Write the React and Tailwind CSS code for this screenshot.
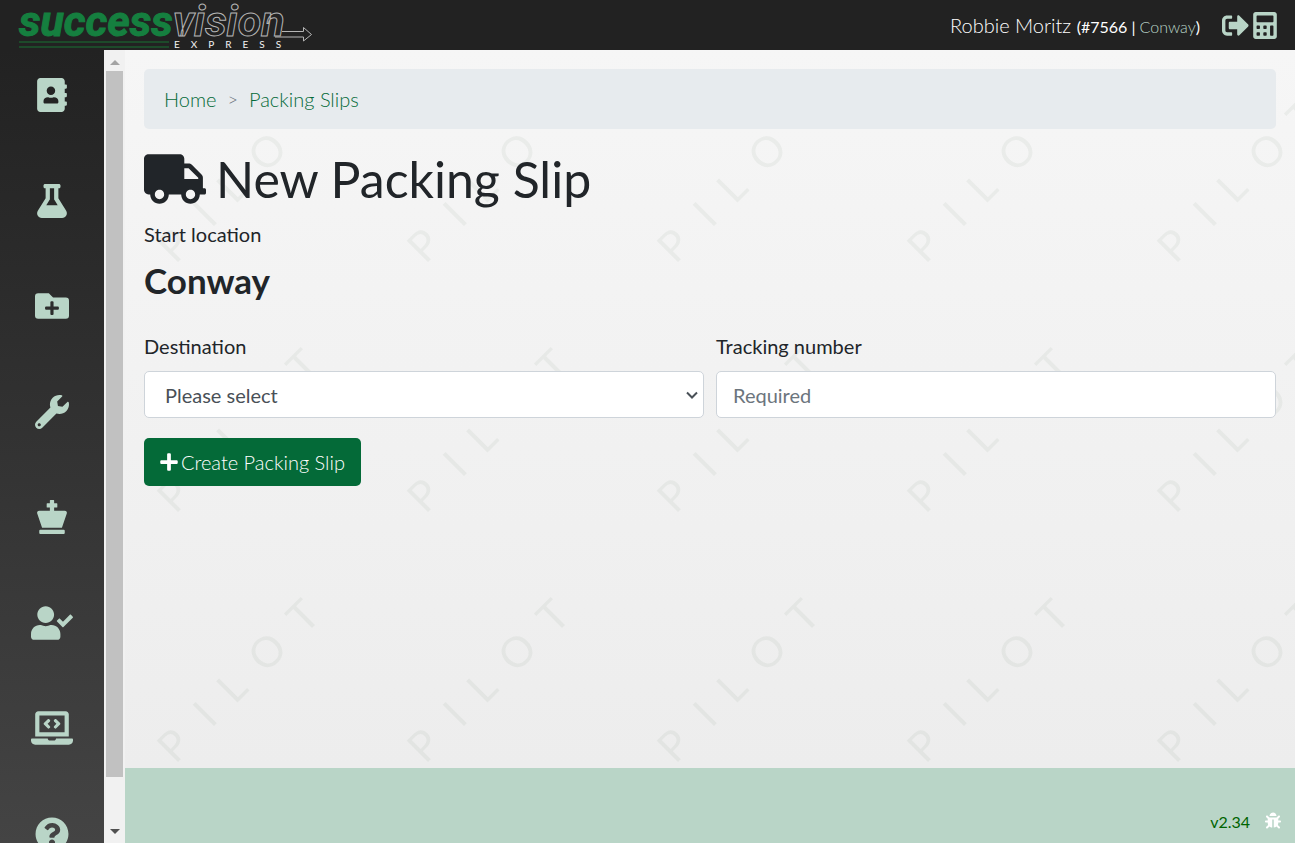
import {
  FaAddressBook, FaFlask, FaFolderPlus, FaWrench, FaChessKing, FaUserCheck,
  FaLaptopCode, FaQuestionCircle, FaSignOutAlt, FaCalculator, FaTruck, FaPlus, FaBug,
} from "react-icons/fa";

const navItems = [
  { label: "Contacts", Icon: FaAddressBook },
  { label: "Lab", Icon: FaFlask },
  { label: "New folder", Icon: FaFolderPlus },
  { label: "Tools", Icon: FaWrench },
  { label: "Administration", Icon: FaChessKing },
  { label: "User approvals", Icon: FaUserCheck },
  { label: "Developer", Icon: FaLaptopCode },
  { label: "Help", Icon: FaQuestionCircle },
];

function Logo() {
  return (
    <svg width="296" height="50" viewBox="18 0 296 50" role="img" aria-label="Success Vision Express">
      <g fontFamily="Roboto, 'Liberation Sans', sans-serif" fontWeight="bold" fontStyle="italic" fontSize="43">
        <text x="19" y="36" fill="#157f3f" stroke="#157f3f" strokeWidth="1">success</text>
        <text x="173" y="36" fill="#222222" stroke="#b5b5b5" strokeWidth="1">vision</text>
      </g>
      <path d="M19 42H169M19 47H169" stroke="#1d4a2a" strokeWidth="2" />
      <path d="M282 31.500H303.500V27.500L311.500 34.500L303.500 41V37H275" fill="none" stroke="#b5b5b5" />
      <text x="174" y="48" fontSize="10" fontFamily="Lato, sans-serif" fill="#f4f4f4" letterSpacing="11">EXPRESS</text>
    </svg>
  );
}

function Watermark() {
  return (
    <svg className="absolute inset-0 -z-10 h-full w-full" aria-hidden="true">
      <defs>
        <pattern id="pilot" width="250" height="250" patternUnits="userSpaceOnUse">
          <text
            transform="translate(51 214) rotate(-45)"
            x="-1 50 83 127 182"
            fontSize="42"
            fontFamily="Lato, sans-serif"
            fill="#285028"
            fillOpacity="0.055"
          >
            PILOT
          </text>
        </pattern>
      </defs>
      <rect width="100%" height="100%" fill="url(#pilot)" />
    </svg>
  );
}

function ScrollBar() {
  return (
    <div className="flex w-[21px] shrink-0 flex-col items-center bg-[#f1f1f1]" aria-hidden="true">
      <div className="flex h-[21px] items-center pt-1">
        <svg width="10" height="5"><path d="M0 5L5 0L10 5Z" fill="#a3a3a3" /></svg>
      </div>
      <div className="w-[17px] flex-1 bg-[#c1c1c1]" />
      <div className="flex h-[66px] items-end pb-[9px]">
        <svg width="10" height="5"><path d="M0 0L5 5L10 0Z" fill="#505050" /></svg>
      </div>
    </div>
  );
}

export default function App() {
  return (
    <div className="flex h-screen flex-col overflow-hidden bg-[#222222] font-['Lato',sans-serif] text-xl leading-[30px] text-[#212529]">
      <header className="flex h-[50px] shrink-0 items-center justify-between pr-[18px] pl-[18px]">
        <a href="#home"><Logo /></a>
        <div className="flex items-center text-white">
          <p className="mr-[22px] font-light">
            Robbie Moritz{" "}
            <span className="text-base font-normal">
              (#7566 | <a href="#location" className="font-light text-[#b9d5c7]">Conway</a>)
            </span>
          </p>
          <div className="flex items-center gap-1 text-[#b9d5c7]">
            <a href="#logout" aria-label="Log out"><FaSignOutAlt className="h-[27px] w-[27px]" /></a>
            <a href="#calculator" aria-label="Calculator"><FaCalculator className="h-[27px] w-6" /></a>
          </div>
        </div>
      </header>

      <div className="flex min-h-0 flex-1">
        <nav className="w-[104px] shrink-0 overflow-hidden bg-linear-to-b from-[#222222] to-[#444444]">
          <ul className="flex h-[801px] flex-col items-center justify-between pt-7 text-[#b9d5c7]">
            {navItems.map(({ label, Icon }) => (
              <li key={label}>
                <a href="#nav" aria-label={label}><Icon className="h-[34px] w-[42px]" /></a>
              </li>
            ))}
          </ul>
        </nav>
        <ScrollBar />

        <div className="flex min-w-0 flex-1 flex-col">
          <main className="relative isolate flex-1 bg-linear-to-b from-[#f6f6f6] to-[#ededed] px-[19px] pt-[19px]">
            <Watermark />
            <nav aria-label="Breadcrumb" className="flex h-[60px] items-center gap-[11px] rounded-[5px] bg-[#e7ebee] px-5 font-light">
              <a href="#home" className="text-[#046a38]">Home</a>
              <span className="text-lg text-[#6c757d]">&gt;</span>
              <a href="#slips" className="text-[#046a38]">Packing Slips</a>
            </nav>

            <h1 className="mt-5 flex items-center gap-[10px] text-[50px] leading-[60px]">
              <FaTruck className="h-[50px] w-[62px]" />
              New Packing Slip
            </h1>
            <p className="mt-[10px]">Start location</p>
            <h2 className="mt-[10px] text-[35px] leading-[42px] font-bold">Conway</h2>

            <form onSubmit={(e) => e.preventDefault()}>
              <div className="mt-[30px] grid grid-cols-2 gap-3">
                <div>
                  <label htmlFor="destination" className="mb-[10px] block">Destination</label>
                  <div className="relative">
                    <select id="destination" className="h-[47px] w-full appearance-none rounded-[5px] border border-[#ced4da] bg-white px-5 text-[#495057]">
                      <option>Please select</option>
                    </select>
                    <svg className="pointer-events-none absolute top-5 right-[6px]" width="12" height="8" fill="none">
                      <path d="M1 1.500L6 6.500L11 1.500" stroke="#495057" strokeWidth="2" />
                    </svg>
                  </div>
                </div>
                <div>
                  <label htmlFor="tracking" className="mb-[10px] block">Tracking number</label>
                  <input id="tracking" type="text" placeholder="Required" className="h-[47px] w-full rounded-[5px] border border-[#ced4da] bg-white px-4 placeholder:text-[#6c757d]" />
                </div>
              </div>
              <button type="submit" className="mt-5 flex h-12 items-center gap-[3px] rounded-[5px] bg-[#046a38] px-4 font-light text-white">
                <FaPlus className="w-[18px]" />
                Create Packing Slip
              </button>
            </form>
          </main>
          <footer className="flex h-[75px] shrink-0 items-end justify-end gap-[15px] bg-[#b9d5c7] pr-[14px] pb-[9px] text-base leading-6 text-[#006400]">
            <span>v2.34</span>
            <button type="button" aria-label="Report a bug" className="pb-[5px] text-white"><FaBug className="h-[17px] w-4" /></button>
          </footer>
        </div>
      </div>
    </div>
  );
}
